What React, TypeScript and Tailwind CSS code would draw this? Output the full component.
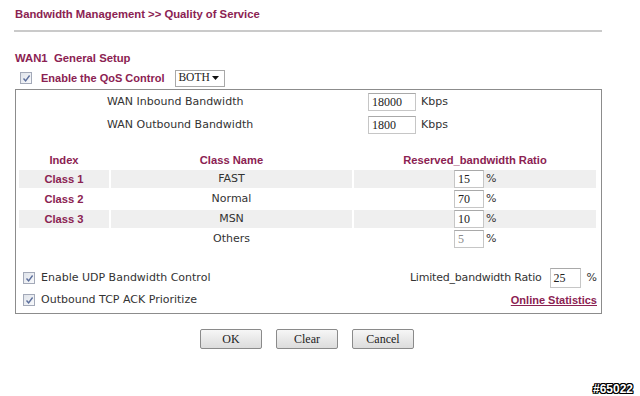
import React from "react";

const maroon = "text-[#8b2252]";

function Check() {
  return (
    <div className="w-[12px] h-[12px] border border-[#a3a9b8] bg-gradient-to-br from-[#dfe3ea] to-[#f8f9fb] flex items-center justify-center shrink-0">
      <svg width="9" height="9" viewBox="0 0 9 9">
        <path d="M1.5 4.5 L3.6 6.8 L7.6 1.5" stroke="#5d6f9c" strokeWidth="1.4" fill="none" />
      </svg>
    </div>
  );
}

function Field({ value, w, h = 18, gray = false }: { value: string; w: number; h?: number; gray?: boolean }) {
  return (
    <div
      className={`border border-[#c6c6c6] border-t-[#a9a9a9] bg-white flex items-center pl-[3px] text-[12px] font-['Liberation_Serif',serif] ${gray ? "text-[#8a8a8a]" : "text-[#222]"}`}
      style={{ width: w, height: h }}
    >
      {value}
    </div>
  );
}

function Btn({ label }: { label: string }) {
  return (
    <div className="w-[62px] h-[20px] rounded-[2px] border border-[#8a8a8a] bg-gradient-to-b from-[#f6f6f6] to-[#dcdcdc] flex items-center justify-center text-[12px] text-[#222] font-['Liberation_Serif',serif]">
      {label}
    </div>
  );
}

const rows = [
  { idx: "Class 1", name: "FAST", v: "15", bg: true },
  { idx: "Class 2", name: "Normal", v: "70", bg: false },
  { idx: "Class 3", name: "MSN", v: "10", bg: true },
  { idx: "", name: "Others", v: "5", bg: false, gray: true },
];

export default function App() {
  return (
    <div className="relative w-[640px] h-[396px] bg-white overflow-hidden font-['DejaVu_Sans',sans-serif] text-[11px] text-[#333]">
      <div className={`pl-[15px] pt-[7px] leading-[14px] font-['Liberation_Sans',Arial,sans-serif] font-bold text-[11.3px] ${maroon}`}>
        Bandwidth Management &gt;&gt; Quality of Service
      </div>
      <div className="ml-[14px] mt-[9px] w-[588px] h-[2px] bg-[#cacaca]" />

      <div className={`pl-[15px] mt-[19px] leading-[14px] font-['Liberation_Sans',Arial,sans-serif] font-bold text-[11.3px] ${maroon}`}>
        WAN1&nbsp; General Setup
      </div>
      <div className="flex items-center h-[18px] mt-[4px] pl-[20px]">
        <Check />
        <span className={`ml-[9px] font-['Liberation_Sans',Arial,sans-serif] font-bold text-[11px] ${maroon}`}>
          Enable the QoS Control
        </span>
        <div className="ml-[11px] w-[50px] h-[17px] border border-[#a8a8a8] bg-white flex items-center justify-between pl-[2px] pr-[5px] text-[11.5px] text-[#222] font-['Liberation_Serif',serif]">
          <span>BOTH</span>
          <svg width="7" height="4" viewBox="0 0 7 4">
            <path d="M0 0 H7 L3.5 4 Z" fill="#111" />
          </svg>
        </div>
      </div>

      <div className="mt-[2px] ml-[15px] w-[587px] h-[225px] border border-[#8c8c8c] pt-[3px]">
        <div className="flex items-center h-[18px]">
          <div className="pl-[91px] w-[352px]">WAN Inbound Bandwidth</div>
          <Field value="18000" w={48} />
          <span className="ml-[5px]">Kbps</span>
        </div>
        <div className="flex items-center h-[18px] mt-[5px]">
          <div className="pl-[91px] w-[352px]">WAN Outbound Bandwidth</div>
          <Field value="1800" w={48} />
          <span className="ml-[5px]">Kbps</span>
        </div>

        <div className="mt-[18px] pl-[3px] pr-[4px] flex flex-col gap-[2px]">
          <div className={`flex gap-[2px] h-[16px] items-center font-['Liberation_Sans',Arial,sans-serif] font-bold text-[11.2px] ${maroon}`}>
            <div className="w-[90px] text-center">Index</div>
            <div className="w-[241px] text-center">Class Name</div>
            <div className="w-[242px] text-center">Reserved_bandwidth Ratio</div>
          </div>
          {rows.map((r) => (
            <div key={r.name} className="flex gap-[2px] h-[18px]">
              <div
                className={`w-[90px] flex items-center justify-center font-['Liberation_Sans',Arial,sans-serif] font-bold text-[11.2px] ${maroon} ${r.bg ? "bg-[#efefef]" : ""}`}
              >
                {r.idx}
              </div>
              <div className={`w-[241px] flex items-center justify-center ${r.bg ? "bg-[#efefef]" : ""}`}>{r.name}</div>
              <div className={`w-[242px] flex items-center pl-[100px] ${r.bg ? "bg-[#efefef]" : ""}`}>
                <Field value={r.v} w={30} gray={r.gray} />
                <span className="ml-[2px]">%</span>
              </div>
            </div>
          ))}
        </div>

        <div className="mt-[20px] pl-[7px] pr-[4px] flex items-center h-[20px]">
          <Check />
          <span className="ml-[6px]">Enable UDP Bandwidth Control</span>
          <div className="ml-auto flex items-center">
            <span className="tracking-[-0.2px]">Limited_bandwidth Ratio</span>
            <div className="ml-[8px]">
              <Field value="25" w={31} h={20} />
            </div>
            <span className="ml-[6px]">%</span>
          </div>
        </div>
        <div className="mt-[2px] pl-[7px] pr-[4px] flex items-center h-[20px]">
          <Check />
          <span className="ml-[6px]">Outbound TCP ACK Prioritize</span>
          <span className={`ml-auto underline font-['Liberation_Sans',Arial,sans-serif] font-bold text-[11px] ${maroon}`}>
            Online Statistics
          </span>
        </div>
      </div>

      <div className="mt-[15px] pl-[200px] flex gap-[14px]">
        <Btn label="OK" />
        <Btn label="Clear" />
        <Btn label="Cancel" />
      </div>

      <div className="absolute left-[593px] top-[380px] text-[12px] font-bold text-white font-['Liberation_Sans',Arial,sans-serif] [text-shadow:1px_0_0_#000,-1px_0_0_#000,0_1px_0_#000,0_-1px_0_#000,1px_1px_0_#000,-1px_-1px_0_#000,1px_-1px_0_#000,-1px_1px_0_#000]">
        #65022
      </div>
    </div>
  );
}
